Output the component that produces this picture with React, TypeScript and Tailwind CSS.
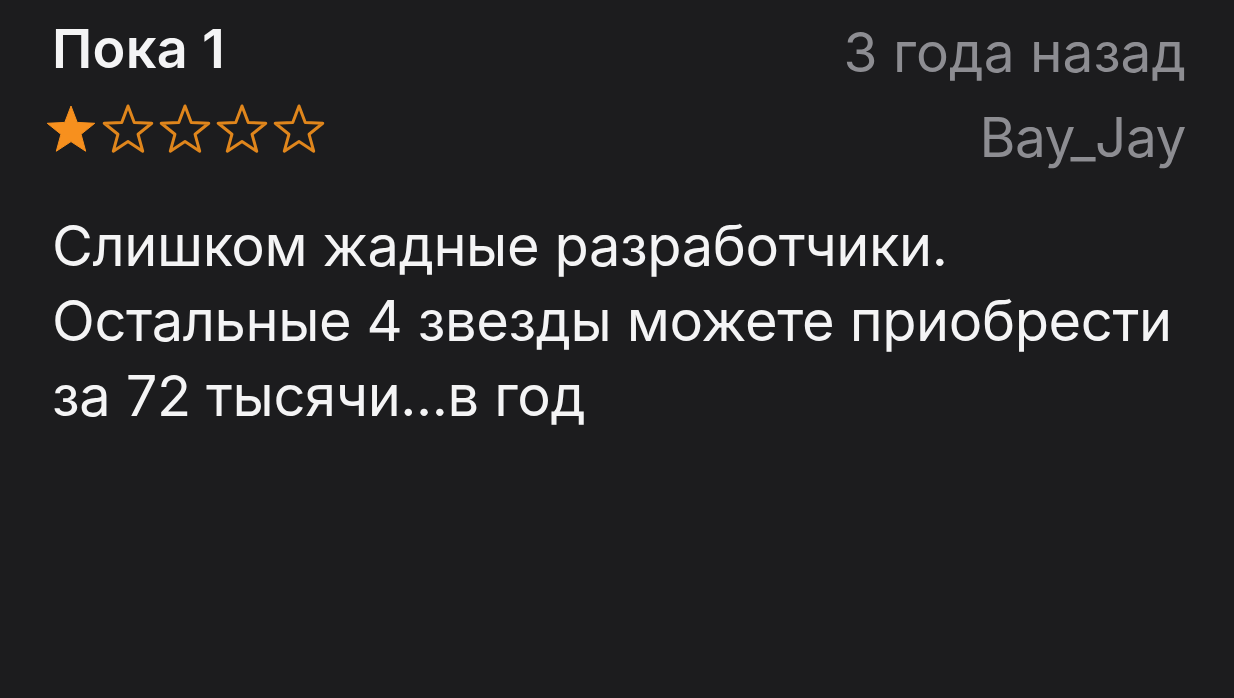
import React from 'react';

// Single App Store style review card, dark theme

const starPoints = (() => {
  const cx = 26;
  const cy = 27;
  const outer = 25;
  const inner = 10.6;
  const pts: string[] = [];
  for (let i = 0; i < 10; i++) {
    const r = i % 2 === 0 ? outer : inner;
    const a = ((-90 + i * 36) * Math.PI) / 180;
    pts.push(`${(cx + r * Math.cos(a)).toFixed(2)},${(cy + r * Math.sin(a)).toFixed(2)}`);
  }
  return pts.join(' ');
})();

const Star = ({ filled }: { filled: boolean }) => (
  <svg width="52" height="50" viewBox="0 0 52 50" className="shrink-0">
    <polygon
      points={starPoints}
      fill={filled ? '#f7901e' : 'none'}
      stroke={filled ? '#f7901e' : '#e0861c'}
      strokeWidth={filled ? 1 : 3}
      strokeLinejoin="round"
    />
  </svg>
);

export default function App() {
  const rating = 1;

  return (
    <div className="w-[1234px] h-[698px] bg-[#1c1c1e] overflow-hidden font-['Inter','Liberation_Sans',sans-serif]">
      <div className="pl-[52px] pr-[48px] pt-[20px]">
        <div className="flex items-start justify-between">
          <div className="flex flex-col">
            <h1 className="text-[54px] leading-[58px] font-semibold text-[#f4f4f5] tracking-[0.3px]">Пока 1</h1>
            <div className="flex gap-[5px] mt-[26px] -ml-[7px]">
              {[0, 1, 2, 3, 4].map((i) => (
                <Star key={i} filled={i < rating} />
              ))}
            </div>
          </div>
          <div className="flex flex-col items-end text-[#8d8d92] text-[55px]">
            <span className="leading-[64px]">3 года назад</span>
            <span className="leading-[64px] mt-[21px] tracking-[-0.5px]">Bay_Jay</span>
          </div>
        </div>
        <p className="mt-[40px] text-[56px] leading-[75px] text-[#f4f4f5] tracking-[-0.4px] whitespace-nowrap">
          Слишком жадные разработчики.
          <br />
          Остальные 4 звезды можете приобрести
          <br />
          за 72 тысячи...в год
        </p>
      </div>
    </div>
  );
}
